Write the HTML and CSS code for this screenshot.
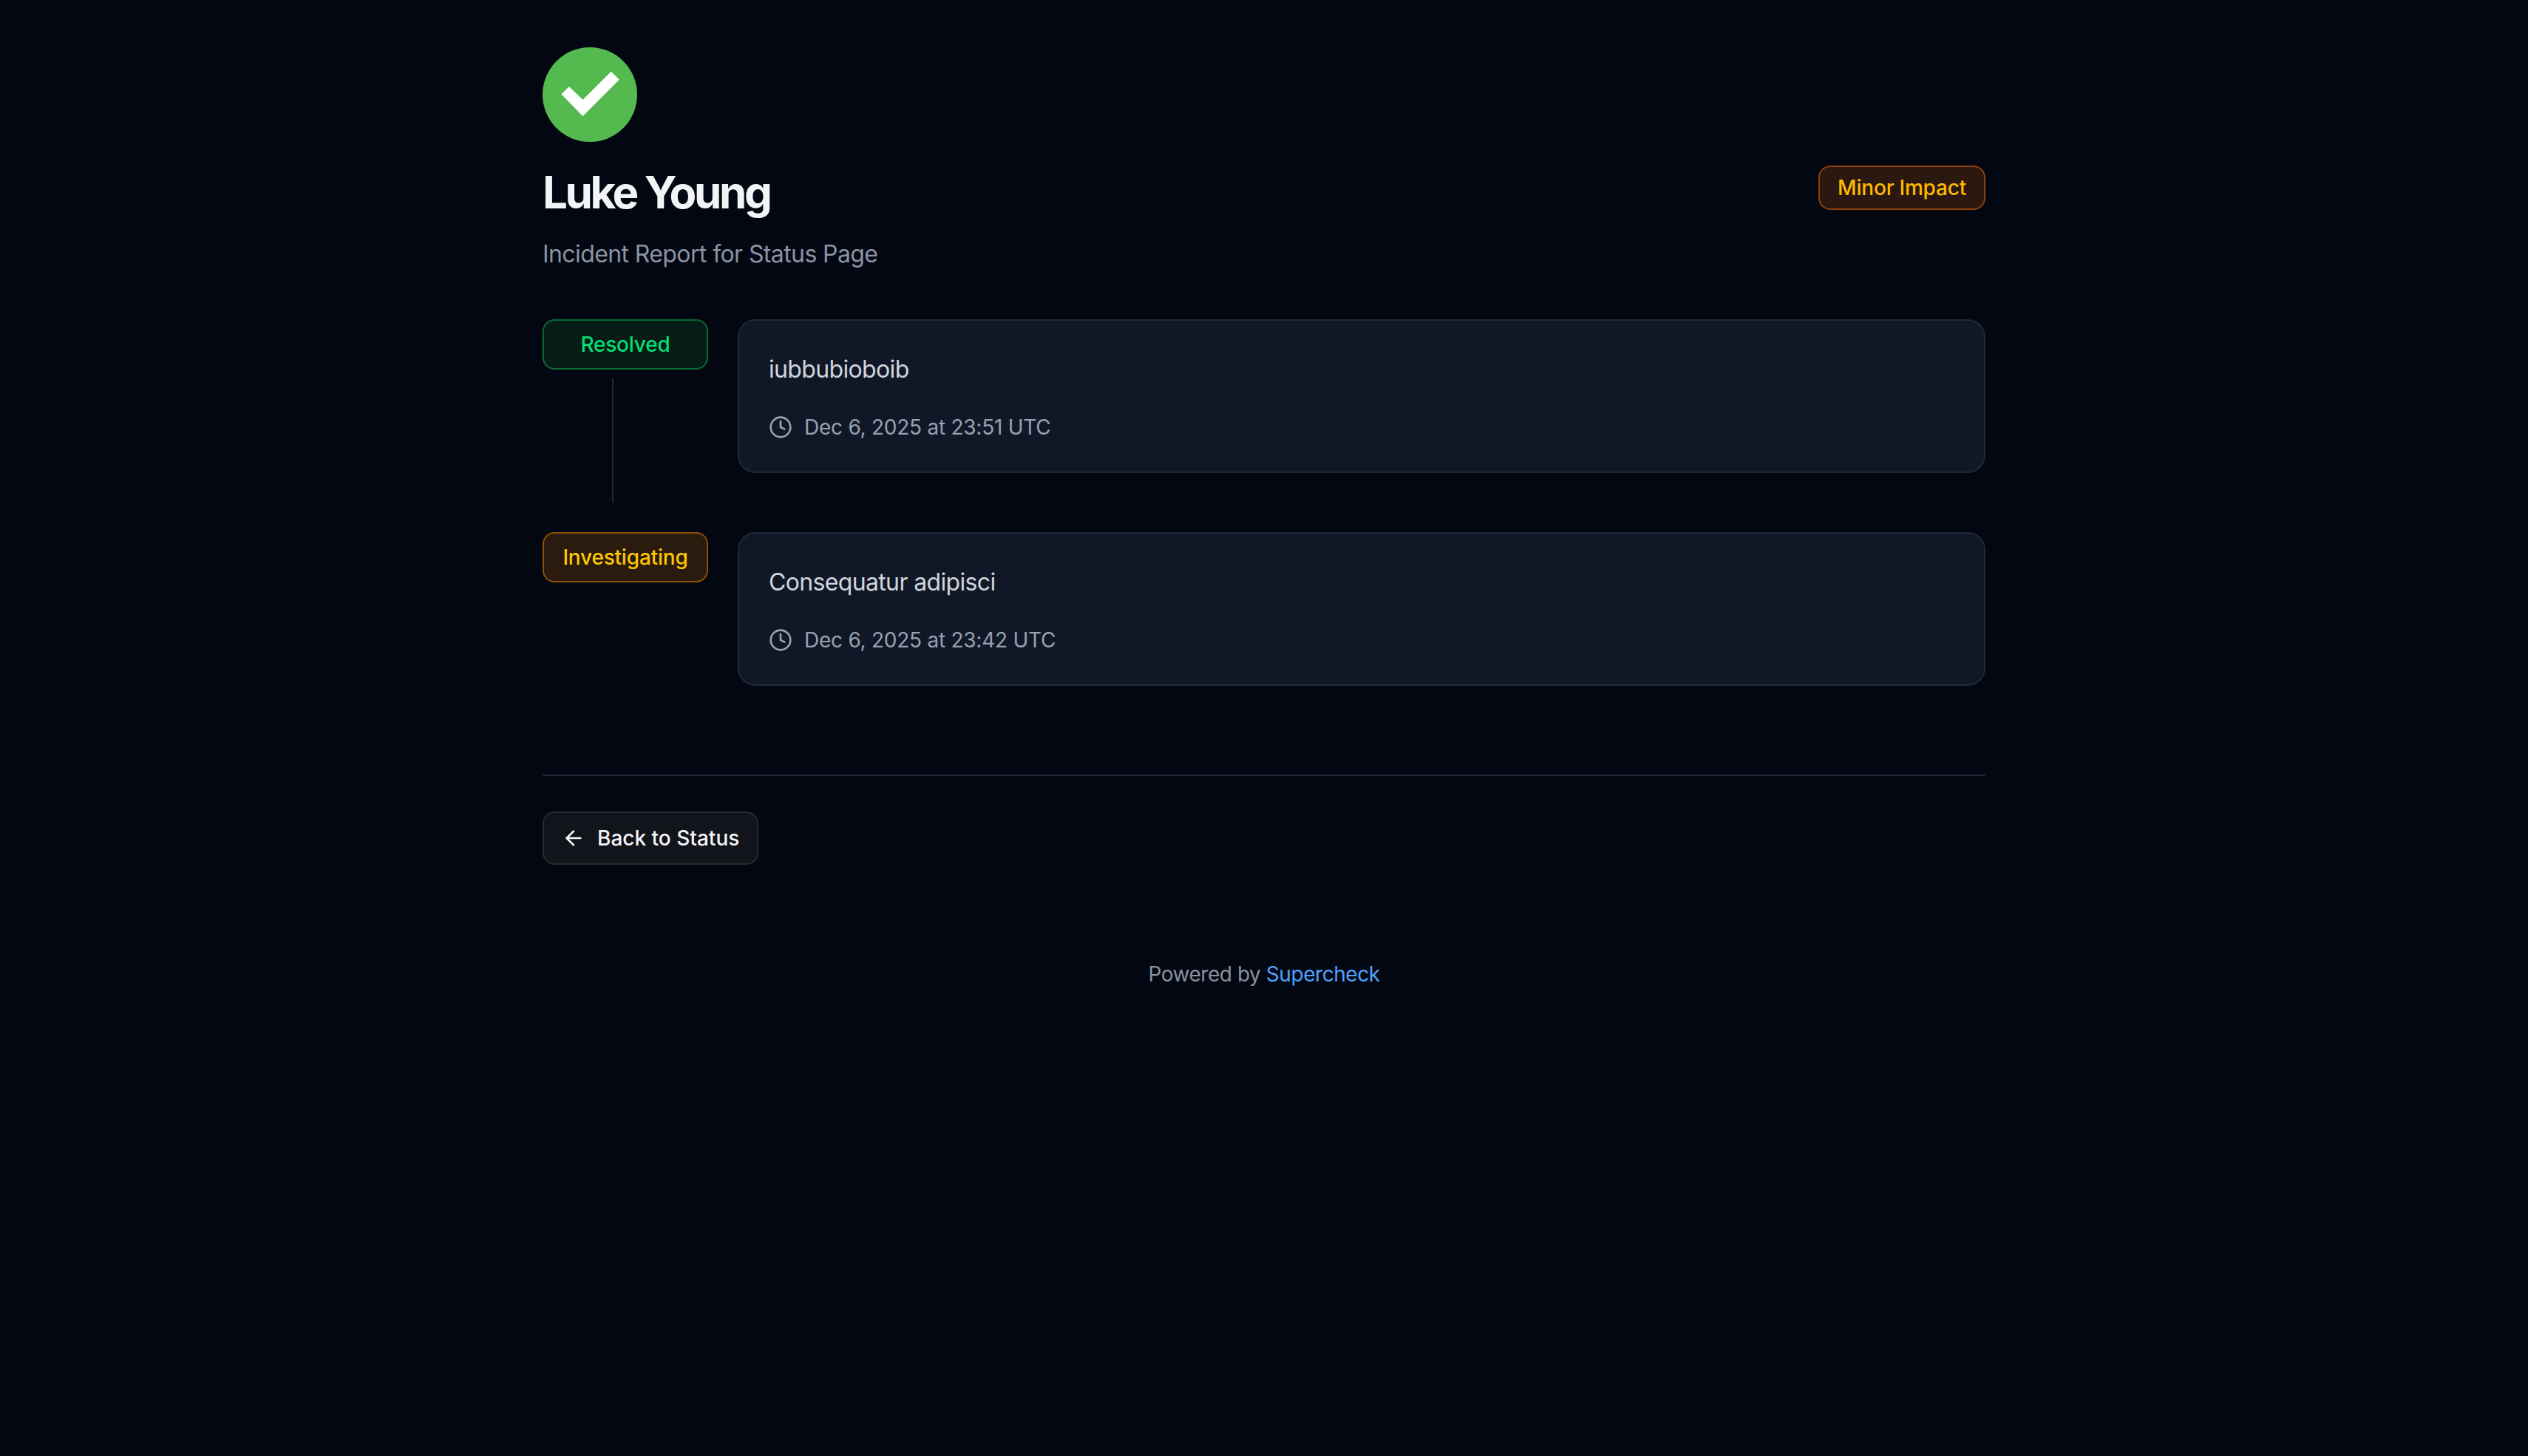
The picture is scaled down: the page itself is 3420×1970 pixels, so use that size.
FILE: index.html
```html
<!DOCTYPE html>
<html lang="en">
<head>
    <meta charset="UTF-8">
    <meta name="viewport" content="width=device-width, initial-scale=1.0">
    <title>Incident Report</title>
    <link rel="stylesheet" href="styles.css">
</head>
<body>
    <main class="container">
        <svg class="logo" viewBox="0 0 128 128">
            <circle cx="64" cy="64" r="64" fill="#54b94e"/>
            <polygon points="25.3,63.3 36,53.3 54.4,71 92.7,32.7 103.8,43.7 54.4,93.3" fill="#fff"/>
        </svg>
        <div class="header">
            <div>
                <h1>Luke Young</h1>
                <p class="subtitle">Incident Report for Status Page</p>
            </div>
            <span class="badge badge-impact">Minor Impact</span>
        </div>

        <div class="update">
            <div class="update-side">
                <span class="badge badge-status badge-resolved">Resolved</span>
                <div class="update-line"></div>
            </div>
            <div class="card">
                <p class="card-text">iubbubioboib</p>
                <div class="card-time">
                    <svg class="icon" viewBox="0 0 24 24"><circle cx="12" cy="12" r="10"/><path d="M12 6v6l4 2"/></svg>
                    <span>Dec 6, 2025 at 23:51 UTC</span>
                </div>
            </div>
        </div>

        <div class="update">
            <div class="update-side">
                <span class="badge badge-status badge-investigating">Investigating</span>
            </div>
            <div class="card">
                <p class="card-text">Consequatur adipisci</p>
                <div class="card-time">
                    <svg class="icon" viewBox="0 0 24 24"><circle cx="12" cy="12" r="10"/><path d="M12 6v6l4 2"/></svg>
                    <span>Dec 6, 2025 at 23:42 UTC</span>
                </div>
            </div>
        </div>

        <div class="footer-nav">
            <a class="back-btn" href="#">
                <svg class="icon" viewBox="0 0 24 24"><path d="m12 19-7-7 7-7"/><path d="M19 12H5"/></svg>
                <span>Back to Status</span>
            </a>
        </div>

        <p class="powered">Powered by <a href="#">Supercheck</a></p>
    </main>
</body>
</html>
```

FILE: styles.css
```css
* {
    box-sizing: border-box;
}
body {
    font-family: Inter, "Liberation Sans", sans-serif;
    margin: 0;
    background-color: #030712;
    min-height: 100vh;
}
p, h1 {
    margin: 0;
}
.container {
    max-width: 2048px;
    margin: 0 auto;
    padding: 64px 48px;
}
.logo {
    display: block;
    width: 128px;
    height: 128px;
    margin-bottom: 32px;
}
.header {
    display: flex;
    justify-content: space-between;
    align-items: flex-start;
    margin-bottom: 64px;
}
h1 {
    font-size: 60px;
    line-height: 72px;
    font-weight: 700;
    letter-spacing: -3.4px;
    color: #f3f4f6;
}
.subtitle {
    margin-top: 24px;
    font-size: 32px;
    line-height: 48px;
    letter-spacing: -0.6px;
    color: #8b93a3;
}
.badge {
    display: flex;
    align-items: center;
    justify-content: center;
    border: 2px solid;
    border-radius: 16px;
    font-size: 28px;
    font-weight: 500;
    letter-spacing: -0.2px;
}
.badge-impact {
    height: 60px;
    padding: 0 24px;
    color: #ffb900;
    background: #2b1810;
    border-color: #8f4008;
}
.badge-status {
    height: 68px;
}
.badge-resolved {
    color: #05df72;
    background: #051c17;
    border-color: #0a6b34;
}
.badge-investigating {
    color: #fdc700;
    background: #2b1a0e;
    border-color: #8e5200;
}
.update {
    display: flex;
    align-items: flex-start;
    gap: 40px;
    margin-bottom: 40px;
}
.update-side {
    width: 224px;
    flex-shrink: 0;
}
.update-line {
    width: 2px;
    height: 168px;
    margin: 12px 0 0 94px;
    background: #1e2939;
}
.card {
    flex: 1;
    padding: 40px;
    background: #101828;
    border: 2px solid #1e2939;
    border-radius: 24px;
}
.card-text {
    font-size: 32px;
    line-height: 52px;
    letter-spacing: -0.65px;
    color: #d1d5dc;
}
.card-time {
    display: flex;
    align-items: center;
    gap: 16px;
    margin-top: 32px;
    font-size: 28px;
    line-height: 40px;
    letter-spacing: -0.25px;
    color: #99a1af;
}
.icon {
    width: 32px;
    height: 32px;
    fill: none;
    stroke: currentColor;
    stroke-width: 2;
    stroke-linecap: round;
    stroke-linejoin: round;
    flex-shrink: 0;
}
.footer-nav {
    margin-top: 120px;
    padding-top: 48px;
    border-top: 2px solid #1e2939;
}
.back-btn {
    display: inline-flex;
    align-items: center;
    gap: 16px;
    height: 72px;
    padding: 0 24px;
    font-size: 28px;
    font-weight: 500;
    color: #f5f5f5;
    text-decoration: none;
    background: #12141c;
    border: 2px solid #2a2a2e;
    border-radius: 16px;
}
.powered {
    margin-top: 128px;
    text-align: center;
    font-size: 28px;
    line-height: 40px;
    letter-spacing: -0.45px;
    color: #8a91a0;
}
.powered a {
    color: #51a2ff;
    text-decoration: none;
}
```
